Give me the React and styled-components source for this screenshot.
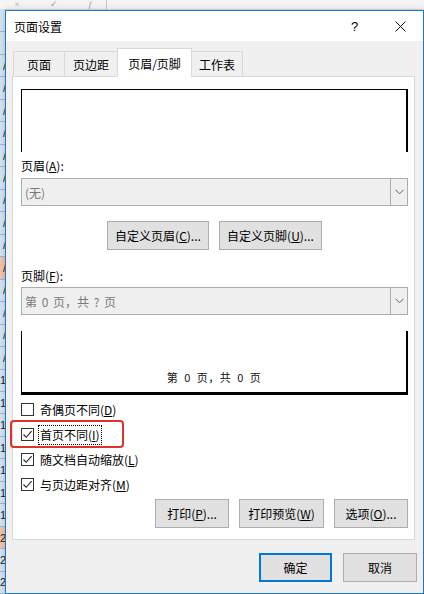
import React from 'react'
import styled, { createGlobalStyle } from 'styled-components'

const GlobalStyle = createGlobalStyle`
  html, body { margin: 0; padding: 0; background: #fff; }
  body {
    font-family: "Segoe UI", "Noto Sans", "Noto Sans CJK SC", sans-serif;
    font-size: 12px;
    color: #000;
  }
`

const FONT = `"Noto Sans CJK SC", "Noto Sans", sans-serif`

const Desktop = styled.div`
  position: relative;
  width: 424px;
  height: 594px;
  overflow: hidden;
  display: grid;
  grid-template-rows: 10px 1fr;
  grid-template-columns: 6px 1fr;
  background: #fff;
`

const FormulaBar = styled.div`
  grid-column: 1 / 3;
  display: flex;
  align-items: center;
  background: #f4f4f4;
  border-bottom: 1px solid #dcdcdc;
`

const BarGlyph = styled.span`
  width: ${p => p.w}px;
  text-align: center;
  color: #a0a0a0;
  font-size: 9px;
  line-height: 9px;
  font-style: ${p => (p.italic ? 'italic' : 'normal')};
  font-family: "Liberation Serif", serif;
  border-right: ${p => (p.divider ? '1px solid #c8c8c8' : 'none')};
`

const RowHeaders = styled.div`
  display: flex;
  flex-direction: column;
  background: #f0f0f0;
  min-height: 0;
`

const RowHead = styled.div`
  flex: 1;
  min-height: 0;
  box-sizing: border-box;
  background: ${p => (p.hot ? '#f2c3a8' : '#d5e2f0')};
  border-bottom: 1px solid #9fb8d4;
  font-size: 11px;
  display: flex;
  align-items: center;
  justify-content: flex-end;
  color: #222;
  overflow: hidden;
  white-space: nowrap;
  font-family: "Liberation Sans", sans-serif;
`

const Sheet = styled.div`
  background: #fff;
`

const Dialog = styled.div`
  position: absolute;
  left: 5px;
  top: 10px;
  width: 419px;
  height: 584px;
  box-sizing: border-box;
  border: 1px solid #1a78c8;
  background: #f0f0f0;
  display: flex;
  flex-direction: column;
  box-shadow: 0 0 6px rgba(0, 0, 0, 0.18);
  font-family: ${FONT};
`

const TitleBar = styled.div`
  height: 30px;
  flex: none;
  background: #fff;
  display: flex;
  align-items: center;
  padding-left: 8px;
`

const Title = styled.div`
  flex: 1;
  font-size: 12px;
`

const TitleButton = styled.div`
  width: ${p => p.w}px;
  height: 30px;
  display: flex;
  align-items: center;
  justify-content: center;
  font-size: 13px;
  font-family: "Liberation Sans", sans-serif;
`

const Body = styled.div`
  flex: 1;
  display: flex;
  flex-direction: column;
  padding: 8px 8px 10px 6px;
`

const TabStrip = styled.div`
  display: flex;
  align-items: flex-end;
  height: 28px;
  padding-left: 2px;
  position: relative;
  z-index: 1;
  margin-bottom: -1px;
`

const Tab = styled.div`
  box-sizing: border-box;
  width: ${p => p.w}px;
  height: ${p => (p.active ? 29 : 26)}px;
  display: flex;
  align-items: center;
  justify-content: center;
  font-size: 12px;
  background: ${p => (p.active ? '#fff' : '#f0f0f0')};
  border: 1px solid #d9d9d9;
  border-bottom: ${p => (p.active ? 'none' : '1px solid #d9d9d9')};
  margin-left: -1px;
  padding-top: ${p => (p.active ? '1px' : '0')};
`

const Panel = styled.div`
  background: #fff;
  border: 1px solid #d9d9d9;
  padding: 12px 6px 11px 8px;
  display: flex;
  flex-direction: column;
`

const Preview = styled.div`
  margin-top: ${p => p.mt || 0}px;
  height: ${p => p.h}px;
  box-sizing: border-box;
  border-left: 1px solid #000;
  border-right: 2px solid #000;
  border-top: ${p => (p.top ? '1px solid #000' : 'none')};
  border-bottom: ${p => (p.bottom ? '3px solid #000' : 'none')};
  display: flex;
  align-items: flex-end;
  justify-content: center;
  padding-bottom: 7px;
`

const PreviewText = styled.span`
  font-size: 11px;
  letter-spacing: 0.5px;
  word-spacing: 3px;
  color: #111;
`

const Label = styled.div`
  margin-top: ${p => p.mt}px;
  height: 16px;
  line-height: 16px;
  font-size: 12px;
`

const Select = styled.div`
  margin-top: ${p => p.mt}px;
  height: 28px;
  box-sizing: border-box;
  display: flex;
  border: 1px solid #adadad;
  background: #efefef;
  color: #7a7a7a;
  font-size: 12px;
`

const SelectValue = styled.div`
  flex: 1;
  display: flex;
  align-items: center;
  padding-left: 3px;
  word-spacing: 2px;
`

const SelectArrow = styled.div`
  width: 16px;
  border-left: 1px solid #adadad;
  display: flex;
  align-items: center;
  justify-content: center;
`

const ButtonRow = styled.div`
  margin-top: ${p => p.mt}px;
  display: flex;
  gap: 10px;
  justify-content: ${p => p.justify};
`

const Button = styled.div`
  box-sizing: border-box;
  width: ${p => p.w}px;
  height: 29px;
  display: flex;
  align-items: center;
  justify-content: center;
  font-size: 12px;
  background: #e1e1e1;
  border: ${p => (p.primary ? '2px solid #0078d7' : '1px solid #adadad')};
`

const Checks = styled.div`
  margin-top: 2px;
  display: flex;
  flex-direction: column;
`

const CheckRow = styled.div`
  height: 25px;
  display: flex;
  align-items: center;
  gap: 4px;
  position: relative;
`

const Box = styled.div`
  width: 13px;
  height: 13px;
  box-sizing: border-box;
  border: 1px solid #333;
  background: #fff;
  display: flex;
  align-items: center;
  justify-content: center;
`

const CheckText = styled.span`
  font-size: 12px;
  line-height: 16px;
  padding: 1px;
  border: 1px ${p => (p.focus ? 'dotted #000' : 'solid transparent')};
`

const Highlight = styled.div`
  position: absolute;
  left: -11px;
  top: -2px;
  width: 114px;
  height: 28px;
  box-sizing: border-box;
  border: 2.5px solid #e0312b;
  border-radius: 4px;
  pointer-events: none;
`

const Footer = styled.div`
  margin-top: 13px;
  margin-right: -2px;
  display: flex;
  justify-content: flex-end;
  gap: 11px;
`

const Chevron = () => (
  <svg width="9" height="6" viewBox="0 0 9 6">
    <path d="M0.5 0.8 L4.5 4.8 L8.5 0.8" fill="none" stroke="#606060" strokeWidth="1" />
  </svg>
)

const CheckMark = () => (
  <svg width="11" height="11" viewBox="0 0 11 11">
    <path d="M1.5 5.5 L4.2 8.3 L9.6 2.2" fill="none" stroke="#222" strokeWidth="1.1" />
  </svg>
)

const CloseIcon = () => (
  <svg width="11" height="11" viewBox="0 0 11 11">
    <path d="M0.5 0.5 L10.5 10.5 M10.5 0.5 L0.5 10.5" stroke="#111" strokeWidth="1" />
  </svg>
)

const Check = ({ checked, focus, highlight, children }) => (
  <CheckRow>
    <Box>{checked && <CheckMark />}</Box>
    <CheckText focus={focus}>{children}</CheckText>
    {highlight && <Highlight />}
  </CheckRow>
)

const rows = [
  '', '', '/', '/', '/', '/', '/', '/', '/', '/', '/', '/',
  '/', '/', '/', '/', '1', '1', '1', '1', '1', '1', '1', '2', '2', '2',
]

export default function App() {
  return (
    <>
      <GlobalStyle />
      <Desktop>
        <FormulaBar>
          <BarGlyph w={34}>×</BarGlyph>
          <BarGlyph w={40}>✓</BarGlyph>
          <BarGlyph w={32} italic divider>f</BarGlyph>
        </FormulaBar>
        <RowHeaders>
          {rows.map((r, i) => (
            <RowHead key={i} hot={i === 11 || i === 23}>{r}</RowHead>
          ))}
        </RowHeaders>
        <Sheet />

        <Dialog>
          <TitleBar>
            <Title>页面设置</Title>
            <TitleButton w={45}>?</TitleButton>
            <TitleButton w={46}><CloseIcon /></TitleButton>
          </TitleBar>
          <Body>
            <TabStrip>
              <Tab w={52}>页面</Tab>
              <Tab w={54}>页边距</Tab>
              <Tab w={75} active>页眉/页脚</Tab>
              <Tab w={52}>工作表</Tab>
            </TabStrip>
            <Panel>
              <Preview h={63} top />
              <Label mt={6}>页眉(<u>A</u>):</Label>
              <Select mt={4}>
                <SelectValue>(无)</SelectValue>
                <SelectArrow><Chevron /></SelectArrow>
              </Select>
              <ButtonRow mt={15} justify="center">
                <Button w={102}>自定义页眉(<u>C</u>)...</Button>
                <Button w={103}>自定义页脚(<u>U</u>)...</Button>
              </ButtonRow>
              <Label mt={18}>页脚(<u>F</u>):</Label>
              <Select mt={3}>
                <SelectValue>第 0 页，共 ? 页</SelectValue>
                <SelectArrow><Chevron /></SelectArrow>
              </Select>
              <Preview h={64} mt={16} bottom>
                <PreviewText>第 0 页，共 0 页</PreviewText>
              </Preview>
              <Checks>
                <Check>奇偶页不同(<u>D</u>)</Check>
                <Check checked focus highlight>首页不同(<u>I</u>)</Check>
                <Check checked>随文档自动缩放(<u>L</u>)</Check>
                <Check checked>与页边距对齐(<u>M</u>)</Check>
              </Checks>
              <ButtonRow mt={2} justify="flex-end">
                <Button w={74}>打印(<u>P</u>)...</Button>
                <Button w={85}>打印预览(<u>W</u>)</Button>
                <Button w={74}>选项(<u>O</u>)...</Button>
              </ButtonRow>
            </Panel>
            <Footer>
              <Button w={73} primary>确定</Button>
              <Button w={74}>取消</Button>
            </Footer>
          </Body>
        </Dialog>
      </Desktop>
    </>
  )
}
